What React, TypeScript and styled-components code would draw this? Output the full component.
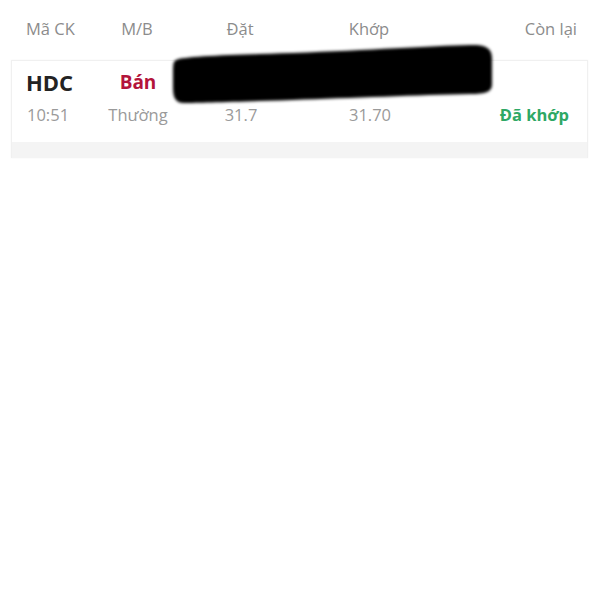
import * as React from 'react'
import styled, { createGlobalStyle } from 'styled-components'

const GlobalStyle = createGlobalStyle`
  html, body {
    margin: 0;
    padding: 0;
    background: #ffffff;
    font-family: 'Open Sans', 'Noto Sans', sans-serif;
  }
`

const Page = styled.div`
  position: relative;
  width: 600px;
  height: 600px;
  padding: 0 12px 0 11px;
  box-sizing: border-box;
`

const Row = styled.div<{ $right?: number }>`
  display: grid;
  grid-template-columns: 70px 82px 124px 134px 1fr;
  align-items: center;
  padding: 0 ${p => p.$right ?? 11}px 0 15px;
`

const Header = styled(Row)`
  height: 60px;
  padding-bottom: 4px;
  box-sizing: border-box;
`

const HeadCell = styled.div<{ $align?: string }>`
  font-size: 16.5px;
  color: #8c8c8c;
  text-align: ${p => p.$align || 'center'};
  white-space: nowrap;
`

const Card = styled.div`
  background: #fff;
  border: 1px solid #f0f0f0;
  border-bottom: none;
  box-shadow: 0 0 2px rgba(0, 0, 0, 0.04);
`

const CardBody = styled.div`
  display: flex;
  flex-direction: column;
  gap: 7px;
  padding: 7px 0 16px;
`

const Cell = styled.div<{ $align?: string; $color?: string; $size?: number; $bold?: boolean }>`
  font-size: ${p => p.$size || 16.5}px;
  line-height: ${p => Math.round((p.$size || 16.5) + 6)}px;
  color: ${p => p.$color || '#9a9a9a'};
  font-weight: ${p => (p.$bold ? 700 : 400)};
  text-align: ${p => p.$align || 'center'};
  white-space: nowrap;
`

const Symbol = styled(Cell)`
  margin-left: -1px;
`

const Band = styled.div`
  height: 16px;
  background: #f4f4f4;
`

// redaction scribble lying over the row
const Scribble = styled.svg`
  position: absolute;
  left: 170px;
  top: 42px;
`

const App = () => (
  <Page>
    <GlobalStyle />
    <Header>
      <HeadCell $align='left'>Mã CK</HeadCell>
      <HeadCell>M/B</HeadCell>
      <HeadCell>Đặt</HeadCell>
      <HeadCell>Khớp</HeadCell>
      <HeadCell $align='right'>Còn lại</HeadCell>
    </Header>
    <Card>
      <CardBody>
        <Row $right={18}>
          <Symbol $align='left' $size={22} $bold $color='#232323'>HDC</Symbol>
          <Cell $size={19} $bold $color='#b3143b'>Bán</Cell>
          <Cell />
          <Cell />
          <Cell />
        </Row>
        <Row $right={18}>
          <Cell $align='left'>10:51</Cell>
          <Cell>Thường</Cell>
          <Cell>31.7</Cell>
          <Cell>31.70</Cell>
          <Cell $align='right' $bold $color='#2ea865'>Đã khớp</Cell>
        </Row>
      </CardBody>
      <Band />
    </Card>
    <Scribble width='326' height='66' viewBox='0 0 326 66'>
      <defs>
        <filter id='soft' x='-5%' y='-20%' width='110%' height='140%'>
          <feGaussianBlur stdDeviation='1.4' />
        </filter>
      </defs>
      <path
        d='M6 18 C14 14 60 13 123 11 C200 8 260 4 300 3 C318 2 322 8 322 16 L322 42 C322 50 316 52 300 52 C250 53 180 56 123 58 C60 60 30 61 14 61 C5 61 3 55 3 45 L3 28 C3 21 4 19 6 18 Z'
        fill='#050505'
        filter='url(#soft)'
      />
    </Scribble>
  </Page>
)

export default App
